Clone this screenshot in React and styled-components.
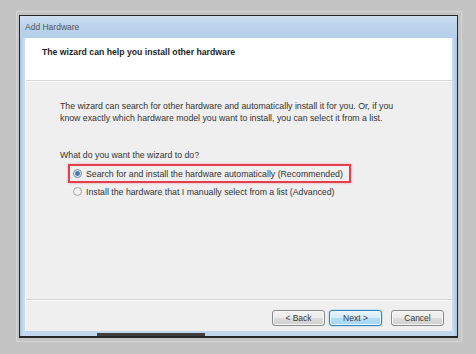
import React from "react";
import styled, { createGlobalStyle } from "styled-components";

const Global = createGlobalStyle`
  html, body {
    margin: 0;
    padding: 0;
    background: #c4c4c4;
  }
  * {
    box-sizing: border-box;
  }
`;

const Canvas = styled.div`
  width: 476px;
  height: 354px;
  padding: 11px 0 0 16px;
  background: #c4c4c4;
  font-family: "Liberation Sans", Arial, sans-serif;
`;

const Halo = styled.div`
  width: 446px;
  height: 331px;
  border: 1px solid #d6d6d6;
  padding: 3px 0 0 2px;
`;

const Window = styled.div`
  width: 439px;
  height: 323px;
  border: 1px solid #262626;
  border-bottom-width: 2px;
  display: flex;
  flex-direction: column;
  background: #bcd3ec;
`;

const TitleBar = styled.div`
  height: 22px;
  flex-shrink: 0;
  display: flex;
  align-items: center;
  padding-left: 5px;
  background: linear-gradient(180deg, #cfe0f3 0%, #bcd3ec 45%, #b6cfea 100%);
  font-size: 8.5px;
  color: #555555;
`;

const Frame = styled.div`
  flex: 1;
  display: flex;
  flex-direction: column;
  padding: 0 5px 0 5px;
  background: linear-gradient(90deg, #a9c4e2 0px, #c9dcf0 4px, #c9dcf0 calc(100% - 4px), #a9c4e2 100%);
`;

const Client = styled.div`
  flex: 1;
  display: flex;
  flex-direction: column;
  background: #efefef;
  border-left: 1px solid #f8fbff;
`;

const Header = styled.div`
  height: 43px;
  flex-shrink: 0;
  background: #ffffff;
  border-bottom: 1px solid #d7d7d7;
  padding: 8px 0 0 16px;
  font-size: 8.7px;
  line-height: 12px;
  font-weight: bold;
  color: #1e1e1e;
`;

const Content = styled.div`
  flex: 1;
  padding: 18px 0 0 34px;
  border-top: 1px solid #fbfbfb;
  border-bottom: 1px solid #d2d2d2;
  font-size: 8.75px;
  line-height: 12px;
  color: #333333;
`;

const Paragraph = styled.p`
  margin: 0 0 25px 0;
`;

const Question = styled.div`
  margin-bottom: 3px;
`;

const Options = styled.div`
  display: flex;
  flex-direction: column;
  margin-left: 8px;
`;

const OptionRow = styled.label`
  display: flex;
  align-items: center;
  gap: 4px;
  white-space: nowrap;
  width: ${(p) => (p.$marked ? "283px" : "auto")};
  height: ${(p) => (p.$marked ? "19px" : "17px")};
  padding-left: ${(p) => (p.$marked ? "3px" : "5px")};
  border: ${(p) => (p.$marked ? "2px solid #e2404f" : "none")};
  box-shadow: ${(p) => (p.$marked ? "0 0 2px rgba(226,64,79,0.5)" : "none")};
`;

const Radio = styled.span`
  width: 9px;
  height: 9px;
  border-radius: 50%;
  flex-shrink: 0;
  border: 1px solid ${(p) => (p.$on ? "#6d8aa6" : "#a8a8a8")};
  background: ${(p) =>
    p.$on
      ? "radial-gradient(circle, #3c6c95 0, #4f86b5 2px, #e6eef6 3px)"
      : "radial-gradient(circle, #f8f8f8 0, #e3e3e3 100%)"};
`;

const Footer = styled.div`
  height: 31px;
  flex-shrink: 0;
  border-top: 1px solid #ffffff;
  display: flex;
  justify-content: flex-end;
  align-items: flex-start;
  padding: 9px 8px 0 0;
`;

const Button = styled.button`
  width: 53px;
  height: 16px;
  margin-left: ${(p) => p.$gap || 0}px;
  padding: 0;
  border-radius: 3px;
  border: 1px solid ${(p) => (p.$primary ? "#3c7fb1" : "#8a8a8a")};
  background: ${(p) =>
    p.$primary
      ? "linear-gradient(180deg, #e8f5fc 0%, #d3ecfa 50%, #b4ddf5 51%, #a6d6f3 100%)"
      : "linear-gradient(180deg, #f3f3f3 0%, #ebebeb 50%, #dddddd 51%, #cfcfcf 100%)"};
  box-shadow: ${(p) =>
    p.$primary ? "0 0 2px #6fc3f0, inset 0 0 0 1px #e6f6ff" : "inset 0 0 0 1px #f7f7f7"};
  font-family: "Liberation Sans", Arial, sans-serif;
  font-size: 8.5px;
  color: #3a3a3a;
`;

const BottomEdge = styled.div`
  height: 5px;
  flex-shrink: 0;
  display: flex;
  align-items: flex-end;
  background: #c1d7ee;
`;

const Shade = styled.div`
  width: 108px;
  height: 3px;
  margin-left: 72px;
  background: #3e3e3e;
`;

export default function App() {
  return (
    <>
      <Global />
      <Canvas>
        <Halo>
          <Window>
            <TitleBar>Add Hardware</TitleBar>
            <Frame>
              <Client>
                <Header>The wizard can help you install other hardware</Header>
                <Content>
                  <Paragraph>
                    The wizard can search for other hardware and automatically install it for you. Or, if you
                    <br />
                    know exactly which hardware model you want to install, you can select it from a list.
                  </Paragraph>
                  <Question>What do you want the wizard to do?</Question>
                  <Options>
                    <OptionRow $marked>
                      <Radio $on />
                      Search for and install the hardware automatically (Recommended)
                    </OptionRow>
                    <OptionRow>
                      <Radio />
                      Install the hardware that I manually select from a list (Advanced)
                    </OptionRow>
                  </Options>
                </Content>
                <Footer>
                  <Button>&lt; Back</Button>
                  <Button $primary $gap={4}>Next &gt;</Button>
                  <Button $gap={9}>Cancel</Button>
                </Footer>
              </Client>
              <BottomEdge>
                <Shade />
              </BottomEdge>
            </Frame>
          </Window>
        </Halo>
      </Canvas>
    </>
  );
}
